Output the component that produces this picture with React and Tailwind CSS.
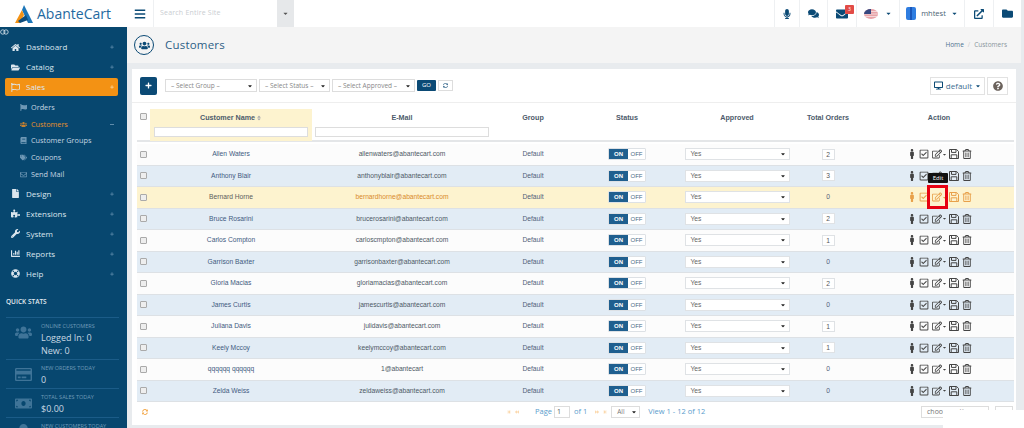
import {
  FaBars, FaBook, FaCaretDown, FaChartBar, FaComments, FaDesktop, FaEnvelope, FaExternalLinkAlt, FaFile, FaFolder, FaFolderOpen,
  FaHome, FaLifeRing, FaMale, FaMicrophone, FaMoneyBill, FaPlus, FaPuzzlePiece, FaQuestionCircle, FaRegCheckSquare,
  FaRegCreditCard, FaRegEdit, FaRegEnvelope, FaRegFlag, FaRegTrashAlt, FaStepBackward,
  FaStepForward, FaBackward, FaForward, FaSort, FaSyncAlt, FaTags, FaUser, FaUsers, FaWrench, FaFlag,
} from "react-icons/fa";

const font = "font-['Open_Sans','Liberation_Sans',sans-serif]";
const tableFont = "font-['Liberation_Sans',Arial,sans-serif]";
const cols = "grid grid-cols-[13px_162px_180px_82px_106px_114px_68px_152px] items-center";

const customers = [
  ["Allen Waters", "allenwaters@abantecart.com", 2],
  ["Anthony Blair", "anthonyblair@abantecart.com", 3],
  ["Bernard Horne", "bernardhorne@abantecart.com", 0],
  ["Bruce Rosarini", "brucerosarini@abantecart.com", 2],
  ["Carlos Compton", "carloscmpton@abantecart.com", 1],
  ["Garrison Baxter", "garrisonbaxter@abantecart.com", 0],
  ["Gloria Macias", "gloriamacias@abantecart.com", 2],
  ["James Curtis", "jamescurtis@abantecart.com", 0],
  ["Juliana Davis", "julidavis@abantecart.com", 1],
  ["Keely Mccoy", "keelymccoy@abantecart.com", 1],
  ["qqqqqq qqqqqq", "1@abantecart", 0],
  ["Zelda Weiss", "zeldaweiss@abantecart.com", 0],
];

function MainItem({ icon: Icon, label, active }) {
  return (
    <div className="py-px pr-[9px] pl-[5px]">
      <div className={`flex h-[18px] items-center rounded-[2px] pr-[4px] pl-[5px] ${active ? "bg-[#f39214]" : ""}`}>
        <span className="flex w-[11px] justify-center text-[9px] text-[#dbe6ee]">
          <Icon />
        </span>
        <span className="ml-[5px] flex-1 text-[8px] text-[#dbe6ee]">{label}</span>
        <FaPlus className={`text-[4px] ${active ? "text-[#ffd9a0]" : "text-[#5f8cab]"}`} />
      </div>
    </div>
  );
}

function SubItem({ icon: Icon, label, active, minus }) {
  return (
    <div className="flex h-[16.7px] items-center pr-[13px] pl-[20px]">
      <span className={`flex w-[7px] justify-center text-[7px] ${active ? "text-[#c58030]" : "text-[#6f98b5]"}`}>
        <Icon />
      </span>
      <span className={`ml-[4px] flex-1 text-[7.3px] ${active ? "text-[#e8912a]" : "text-[#c6d6e2]"}`}>{label}</span>
      {minus && <span className="h-px w-[4px] bg-[#5f8cab]" />}
    </div>
  );
}

function Stat({ icon: Icon, label, values }) {
  return (
    <div className="flex border-t border-[#1b5c88] pt-[4px] pb-[2px]">
      <span className="flex w-[35px] shrink-0 justify-center pt-[2px] text-[17px] text-[#3f7498]">
        <Icon />
      </span>
      <div>
        <div className="mb-px text-[5.5px] leading-[8px] text-[#6f9bb8]">{label}</div>
        {values.map((v) => (
          <div key={v} className="text-[9px] leading-[13px] text-[#c9d8e3]">
            {v}
          </div>
        ))}
      </div>
    </div>
  );
}

function Sidebar() {
  return (
    <aside className="h-full w-[127px] shrink-0 overflow-hidden bg-[#07476f]">
      <div className="flex h-[27px] items-center bg-white pl-[14px]">
        <svg width="20" height="20" viewBox="0 0 20 20">
          <path d="M10 1 L19 19 L14 19 L8 6 Z" fill="#1c76b8" />
          <path d="M8 6 L10 11 L6 19 L1 19 Z" fill="#f39214" />
          <path d="M4 17 L12 11 L14 16 L6 19 Z" fill="#0e4e7e" />
        </svg>
        <span className="ml-[3px] text-[14px] text-[#1f6aa0]">AbanteCart</span>
      </div>
      <div className="flex h-[10px] items-center">
        <svg width="9" height="6" viewBox="0 0 9 6" fill="none" stroke="#dbe6ee" strokeWidth="0.8">
          <circle cx="2.8" cy="3" r="2.2" />
          <circle cx="6" cy="3" r="2.2" />
        </svg>
      </div>
      <MainItem icon={FaHome} label="Dashboard" />
      <MainItem icon={FaFolderOpen} label="Catalog" />
      <MainItem icon={FaRegFlag} label="Sales" active />
      <div className="pt-[2px]">
        <SubItem icon={FaFlag} label="Orders" />
        <SubItem icon={FaUsers} label="Customers" active minus />
        <SubItem icon={FaBook} label="Customer Groups" />
        <SubItem icon={FaTags} label="Coupons" />
        <SubItem icon={FaRegEnvelope} label="Send Mail" />
      </div>
      <div className="h-[1.5px]" />
      <MainItem icon={FaFile} label="Design" />
      <MainItem icon={FaPuzzlePiece} label="Extensions" />
      <MainItem icon={FaWrench} label="System" />
      <MainItem icon={FaChartBar} label="Reports" />
      <MainItem icon={FaLifeRing} label="Help" />
      <div className="mt-[13px] mr-[8px] ml-[6px]">
        <div className="mb-[10px] text-[6.5px] leading-[10px] font-semibold text-[#e3ebf1]">QUICK STATS</div>
        <Stat icon={FaUsers} label="ONLINE CUSTOMERS" values={["Logged In: 0", "New: 0"]} />
        <Stat icon={FaRegCreditCard} label="NEW ORDERS TODAY" values={["0"]} />
        <Stat icon={FaMoneyBill} label="TOTAL SALES TODAY" values={["$0.00"]} />
        <Stat icon={FaUser} label="NEW CUSTOMERS TODAY" values={[]} />
      </div>
    </aside>
  );
}

function TopCell({ className, children }) {
  return <div className={`flex h-full items-center justify-center border-l border-[#eef0f2] ${className}`}>{children}</div>;
}

function TopBar() {
  return (
    <header className="flex h-[27px] w-[894px] items-center bg-white text-[#0b4a75]">
      <div className="flex w-[26px] justify-center text-[12px]">
        <FaBars />
      </div>
      <div className="flex h-full w-[124px] items-center border-l border-[#eef0f2] pl-[6px] text-[7px] tracking-[0.2px] text-[#c9cdd1]">
        Search Entire Site
      </div>
      <div className="flex h-full w-[17px] items-center justify-center bg-[#e6e8ea] text-[7px] text-[#555]">
        <FaCaretDown />
      </div>
      <div className="flex-1" />
      <TopCell className="w-[25px] text-[10px]">
        <FaMicrophone />
      </TopCell>
      <TopCell className="w-[28px] text-[11px]">
        <FaComments />
      </TopCell>
      <TopCell className="relative w-[29px] text-[12px]">
        <FaEnvelope />
        <span className="absolute top-[5px] right-[2px] flex h-[9px] w-[9px] items-center justify-center rounded-[1px] bg-[#e24b46] text-[5px] text-white">
          3
        </span>
      </TopCell>
      <TopCell className="w-[43px] gap-[7px]">
        <svg width="14" height="10" viewBox="0 0 14 10">
          <ellipse cx="7" cy="5" rx="7" ry="5" fill="#e8a3a8" />
          <path d="M1 2.5 H13 M0.3 5 H13.7 M1 7.5 H13" stroke="#f6e4e4" strokeWidth="0.8" />
          <path d="M0 5 A7 5 0 0 1 7 0 V5 Z" fill="#35477f" />
        </svg>
        <FaCaretDown className="text-[7px]" />
      </TopCell>
      <TopCell className="w-[65px] gap-[5px]">
        <span className="flex h-[13px] w-[10px] justify-center rounded-[2px] bg-[#2f7de0]">
          <span className="h-full w-[2px] bg-[#1a56b8]" />
        </span>
        <span className="text-[7.5px] text-[#4b6274]">mhtest</span>
        <FaCaretDown className="text-[7px]" />
      </TopCell>
      <TopCell className="w-[29px] text-[10px]">
        <FaExternalLinkAlt />
      </TopCell>
      <TopCell className="w-[28px] text-[11px]">
        <FaFolder />
      </TopCell>
    </header>
  );
}

function Toolbar() {
  const selects = [
    ["w-[92px]", "– Select Group –"],
    ["w-[71px]", "– Select Status –"],
    ["w-[83px]", "– Select Approved –"],
  ];
  return (
    <div className="flex h-[34px] items-center border-b border-[#eeeeee] pr-[8px] pl-[8px]">
      <div className="flex h-[18px] w-[17px] items-center justify-center rounded-[2px] bg-[#0b4a75] text-[7px] text-white">
        <FaPlus />
      </div>
      <div className="ml-[8px] flex gap-[2px]">
        {selects.map(([w, label]) => (
          <div key={label} className={`flex h-[13px] items-center justify-between border border-[#dddddd] bg-white pr-[3px] pl-[5px] text-[6.5px] text-[#888] ${w}`}>
            {label}
            <FaCaretDown className="text-[6px] text-[#222]" />
          </div>
        ))}
      </div>
      <div className="ml-[2px] flex h-[11px] w-[19px] items-center justify-center rounded-[1px] bg-[#0b4a75] text-[6px] text-white">GO</div>
      <div className="ml-[2px] flex h-[11px] w-[15px] items-center justify-center border border-[#ddd] text-[5px] text-[#3d6d90]">
        <FaSyncAlt />
      </div>
      <div className="flex-1" />
      <div className="flex h-[18px] w-[55px] items-center justify-center gap-[3px] border border-[#e2e2e2] text-[8px] text-[#3d6d90]">
        <FaDesktop className="text-[9px] text-[#0b4a75]" />
        default
        <FaCaretDown className="text-[6px] text-[#0b4a75]" />
      </div>
      <div className="ml-[2px] flex h-[18px] w-[21px] items-center justify-center border border-[#e2e2e2] text-[10px] text-[#6b625c]">
        <FaQuestionCircle />
      </div>
    </div>
  );
}

function HeaderRow() {
  const heads = ["E-Mail", "Group", "Status", "Approved", "Total Orders"];
  return (
    <div className={`${cols} ${tableFont} relative mr-[2px] ml-[5px] h-[39px] items-start border-b-[2px] border-[#e4e6e8] text-[7.2px] font-bold text-[#4d5b6b]`}>
      <span className="mt-[10px] ml-[3px] block h-[7px] w-[7px] rounded-[1px] border border-[#aaa] bg-[#eee]" />
      <div className="mt-[6px] flex h-[32px] flex-col items-center bg-[#fdf3cf] px-[4px]">
        <div className="mt-[2px] flex h-[14px] items-center gap-[1px]">
          Customer Name
          <FaSort className="text-[6px] text-[#aaa]" />
        </div>
        <div className="mt-[2px] h-[10px] w-full border border-[#ddd] bg-white" />
      </div>
      <div className="flex flex-col items-center px-[3px] pt-[8px]">
        <div className="flex h-[14px] items-center">{heads[0]}</div>
        <div className="mt-[2px] h-[10px] w-full border border-[#ddd] bg-white" />
      </div>
      {heads.slice(1).map((h) => (
        <div key={h} className="flex h-[28px] justify-center pt-[8px] leading-[14px]">
          {h}
        </div>
      ))}
      <div className="flex h-[28px] justify-center pt-[8px] pl-[2px] leading-[14px]">Action</div>
    </div>
  );
}

// fa-floppy-o is not in the package, so it is drawn here
function Floppy() {
  return (
    <svg width="10" height="10" viewBox="0 0 10 10" fill="none" stroke="currentColor" strokeWidth="1">
      <path d="M0.5 0.5 H7.6 L9.5 2.4 V9.5 H0.5 Z" />
      <path d="M2.5 0.5 V3.4 H7 V0.5 M2.2 9.5 V5.8 H7.8 V9.5" />
    </svg>
  );
}

function Row({ name, email, orders, index }) {
  const hovered = index === 2;
  const bg = hovered ? "bg-[#fdf3cf]" : index % 2 === 1 ? "bg-[#e2ecf5]" : "bg-[#fcfcfc]";
  const iconColor = hovered ? "text-[#e8a04a]" : "text-[#444]";
  return (
    <div className={`${cols} ${bg} ${tableFont} mr-[2px] ml-[5px] h-[21.5px] border-b border-[#dde1e5] text-center text-[6.7px] text-[#51617a]`}>
      <span className="ml-[3px] h-[7px] w-[7px] rounded-[1px] border border-[#aaa] bg-[#eee]" />
      <span className={hovered ? "text-[#5c5c5c]" : "text-[#3f5a80]"}>{name}</span>
      <span className={hovered ? "text-[#d98a2b]" : "text-[#4d5965]"}>{email}</span>
      <span>Default</span>
      <div className="flex justify-center">
        <div className="flex h-[12px] w-[38px] overflow-hidden rounded-[1px] border border-[#dde1e5] bg-white text-[6px] leading-[10px]">
          <span className="w-[19px] bg-[#1f5f8f] font-bold text-white">ON</span>
          <span className="flex-1 text-[#4a6a85]">OFF</span>
        </div>
      </div>
      <div className="flex justify-center">
        <div className="flex h-[12px] w-[105px] items-center justify-between border border-[#dfe2e5] bg-white pr-[3px] pl-[5px] text-[#666]">
          Yes
          <FaCaretDown className="text-[6px] text-[#222]" />
        </div>
      </div>
      <div className="flex justify-center">
        {orders > 0 ? <span className="h-[11px] w-[13px] border border-[#dfe2e5] bg-white leading-[9px] text-[#555]">{orders}</span> : <span>0</span>}
      </div>
      <div className={`flex items-center justify-center gap-[2.5px] pl-[2px] text-[10px] ${iconColor}`}>
        <FaMale />
        <FaRegCheckSquare />
        <span className="flex items-center">
          <FaRegEdit />
          <FaCaretDown className="text-[5px]" />
        </span>
        <Floppy />
        <FaRegTrashAlt />
      </div>
    </div>
  );
}

function Pager() {
  return (
    <div className="mr-[2px] ml-[5px] flex h-[20px] items-center whitespace-nowrap text-[7.5px] text-[#5a9ccc]">
      <FaSyncAlt className="ml-[5px] text-[6px] text-[#f3a94c]" />
      <span className="ml-[359px] flex gap-[4px] text-[4px] text-[#fbd9ae]">
        <FaStepBackward />
        <FaBackward />
      </span>
      <span className="ml-[16px]">Page</span>
      <span className="ml-[2px] h-[12px] w-[16px] border border-[#ddd] bg-white pl-[2px] text-[7px] leading-[10px] text-[#555]">1</span>
      <span className="ml-[4px]">of 1</span>
      <span className="ml-[8px] flex gap-[4px] text-[4px] text-[#fbd9ae]">
        <FaForward />
        <FaStepForward />
      </span>
      <div className="ml-[4px] flex h-[12px] w-[29px] items-center justify-between border border-[#ddd] bg-white pr-[2px] pl-[5px] text-[6.5px] text-[#777]">
        All
        <FaCaretDown className="text-[6px] text-[#222]" />
      </div>
      <span className="ml-[8px]">View 1 - 12 of 12</span>
      <div className="ml-auto flex h-[12px] w-[68px] items-center border border-[#ddd] bg-white pl-[5px] text-[7px] text-[#777]">choose action</div>
      <div className="mr-px ml-[6px] flex h-[12px] w-[18px] items-center justify-center border border-[#ddd] text-[6px] text-[#999]">GO</div>
    </div>
  );
}

export default function App() {
  return (
    <div className={`relative flex h-[428px] w-[1024px] overflow-hidden bg-[#e8ebee] ${font}`}>
      <Sidebar />
      <div className="min-w-0 flex-1">
        <TopBar />
        <div className="flex h-[36px] w-[894px] items-center bg-[#f4f4f4] pr-[14px] pl-[7px]">
          <span className="flex h-[20px] w-[20px] items-center justify-center rounded-full border border-[#0b4a75] text-[11px] text-[#0b4a75]">
            <FaUsers />
          </span>
          <span className="ml-[11px] flex-1 text-[11.5px] tracking-[0.2px] text-[#2d5f86]">Customers</span>
          <span className="text-[6.5px] text-[#4d7391]">Home</span>
          <span className="mx-[4px] text-[6.5px] text-[#ccc]">/</span>
          <span className="text-[6.5px] text-[#8a949c]">Customers</span>
        </div>
        <main className="mt-[6px] ml-[5px] h-[356px] w-[884px] bg-white">
          <Toolbar />
          <HeaderRow />
          <div className="h-[2px]" />
          {customers.map(([name, email, orders], i) => (
            <Row key={name} name={name} email={email} orders={orders} index={i} />
          ))}
          <Pager />
        </main>
      </div>
      <div className="absolute top-[173px] left-[928px] flex h-[10px] w-[20px] items-center justify-center rounded-[1px] bg-[#111] text-[6px] text-white">Edit</div>
      <div className="absolute top-[185px] left-[927px] h-[24px] w-[21px] border-[3px] border-[#e60012]" />
      <div className="absolute top-[410px] left-[943px] h-[18px] w-[81px] bg-white" />
    </div>
  );
}
